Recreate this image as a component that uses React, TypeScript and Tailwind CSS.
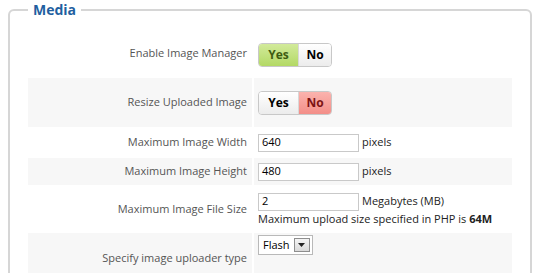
import type { ReactNode } from "react";

function Row({
  label,
  children,
  shaded,
  height,
  top,
}: {
  label: string;
  children: ReactNode;
  shaded?: boolean;
  height: string;
  top?: boolean;
}) {
  const bg = shaded ? "bg-[#f7f7f7]" : "bg-white";
  return (
    <div className={`flex gap-[2px] ${height}`}>
      <div
        className={`flex w-[224px] shrink-0 items-center justify-end pr-[5px] text-[11px] text-[#555] ${bg}`}
      >
        {label}
      </div>
      <div
        className={`flex flex-1 flex-col pl-[4px] ${top ? "justify-start pt-[2px]" : "justify-center"} ${bg}`}
      >
        {children}
      </div>
    </div>
  );
}

function Toggle({ value }: { value: boolean }) {
  const off = "bg-gradient-to-b from-white to-[#ececec] text-black";
  return (
    <div className="flex h-[24px] w-fit overflow-hidden rounded-[4px] border border-[#c8c8c8] text-[12px] font-bold">
      <span
        className={`flex w-[39px] items-center justify-center ${
          value
            ? "bg-gradient-to-b from-[#d2ea9a] to-[#b3d964] text-[#3f5c12]"
            : off
        }`}
      >
        Yes
      </span>
      <span
        className={`flex w-[33px] items-center justify-center border-l border-[#d8d8d8] ${
          !value
            ? "bg-gradient-to-b from-[#fbb3ae] to-[#f38e88] text-[#7d1313]"
            : off
        }`}
      >
        No
      </span>
    </div>
  );
}

function TextBox({ value, unit }: { value: string; unit?: string }) {
  return (
    <div className="flex items-center gap-[3px]">
      <div className="flex h-[18px] w-[101px] items-center border border-[#c9c9c9] bg-white pl-[3px] text-[11px] text-black">
        {value}
      </div>
      {unit && <span className="text-[11px] text-[#222]">{unit}</span>}
    </div>
  );
}

export default function App() {
  return (
    <div
      className="h-[273px] w-[540px] overflow-hidden bg-white"
      style={{ fontFamily: '"Open Sans", "DejaVu Sans", sans-serif' }}
    >
      <fieldset className="mx-[8px] mt-[1px] rounded-[6px] border-2 border-[#d6d6d6] px-[18px] pb-4 pt-[12px]">
        <legend className="px-[5px] text-[14px] font-bold leading-[18px] text-[#1f5fa0]">
          Media
        </legend>
        <div className="flex flex-col gap-[2px]">
          <Row label="Enable Image Manager" height="h-[45px]">
            <div className="pt-[2px]">
              <Toggle value={true} />
            </div>
          </Row>
          <Row label="Resize Uploaded Image" height="h-[49px]" shaded>
            <Toggle value={false} />
          </Row>
          <Row label="Maximum Image Width" height="h-[27px]">
            <TextBox value="640" unit="pixels" />
          </Row>
          <Row label="Maximum Image Height" height="h-[27px]" shaded>
            <TextBox value="480" unit="pixels" />
          </Row>
          <Row label="Maximum Image File Size" height="h-[44px]">
            <TextBox value="2" unit="Megabytes (MB)" />
            <div className="text-[11px] leading-[15px] text-[#222]">
              Maximum upload size specified in PHP is <b>64M</b>
            </div>
          </Row>
          <Row label="Specify image uploader type" height="h-[50px]" shaded top>
            <div className="flex h-[20px] w-fit items-center gap-[4px] border border-[#b9b9b9] bg-white pl-[4px] pr-[2px] text-[11px] text-black">
              Flash
              <span className="flex h-[14px] w-[16px] items-center justify-center border border-[#8e8e8e] bg-gradient-to-b from-[#f4f4f4] to-[#d9d9d9]">
                <svg width="7" height="4" viewBox="0 0 7 4">
                  <path d="M0 0h7L3.5 4z" fill="#222" />
                </svg>
              </span>
            </div>
          </Row>
        </div>
      </fieldset>
    </div>
  );
}
